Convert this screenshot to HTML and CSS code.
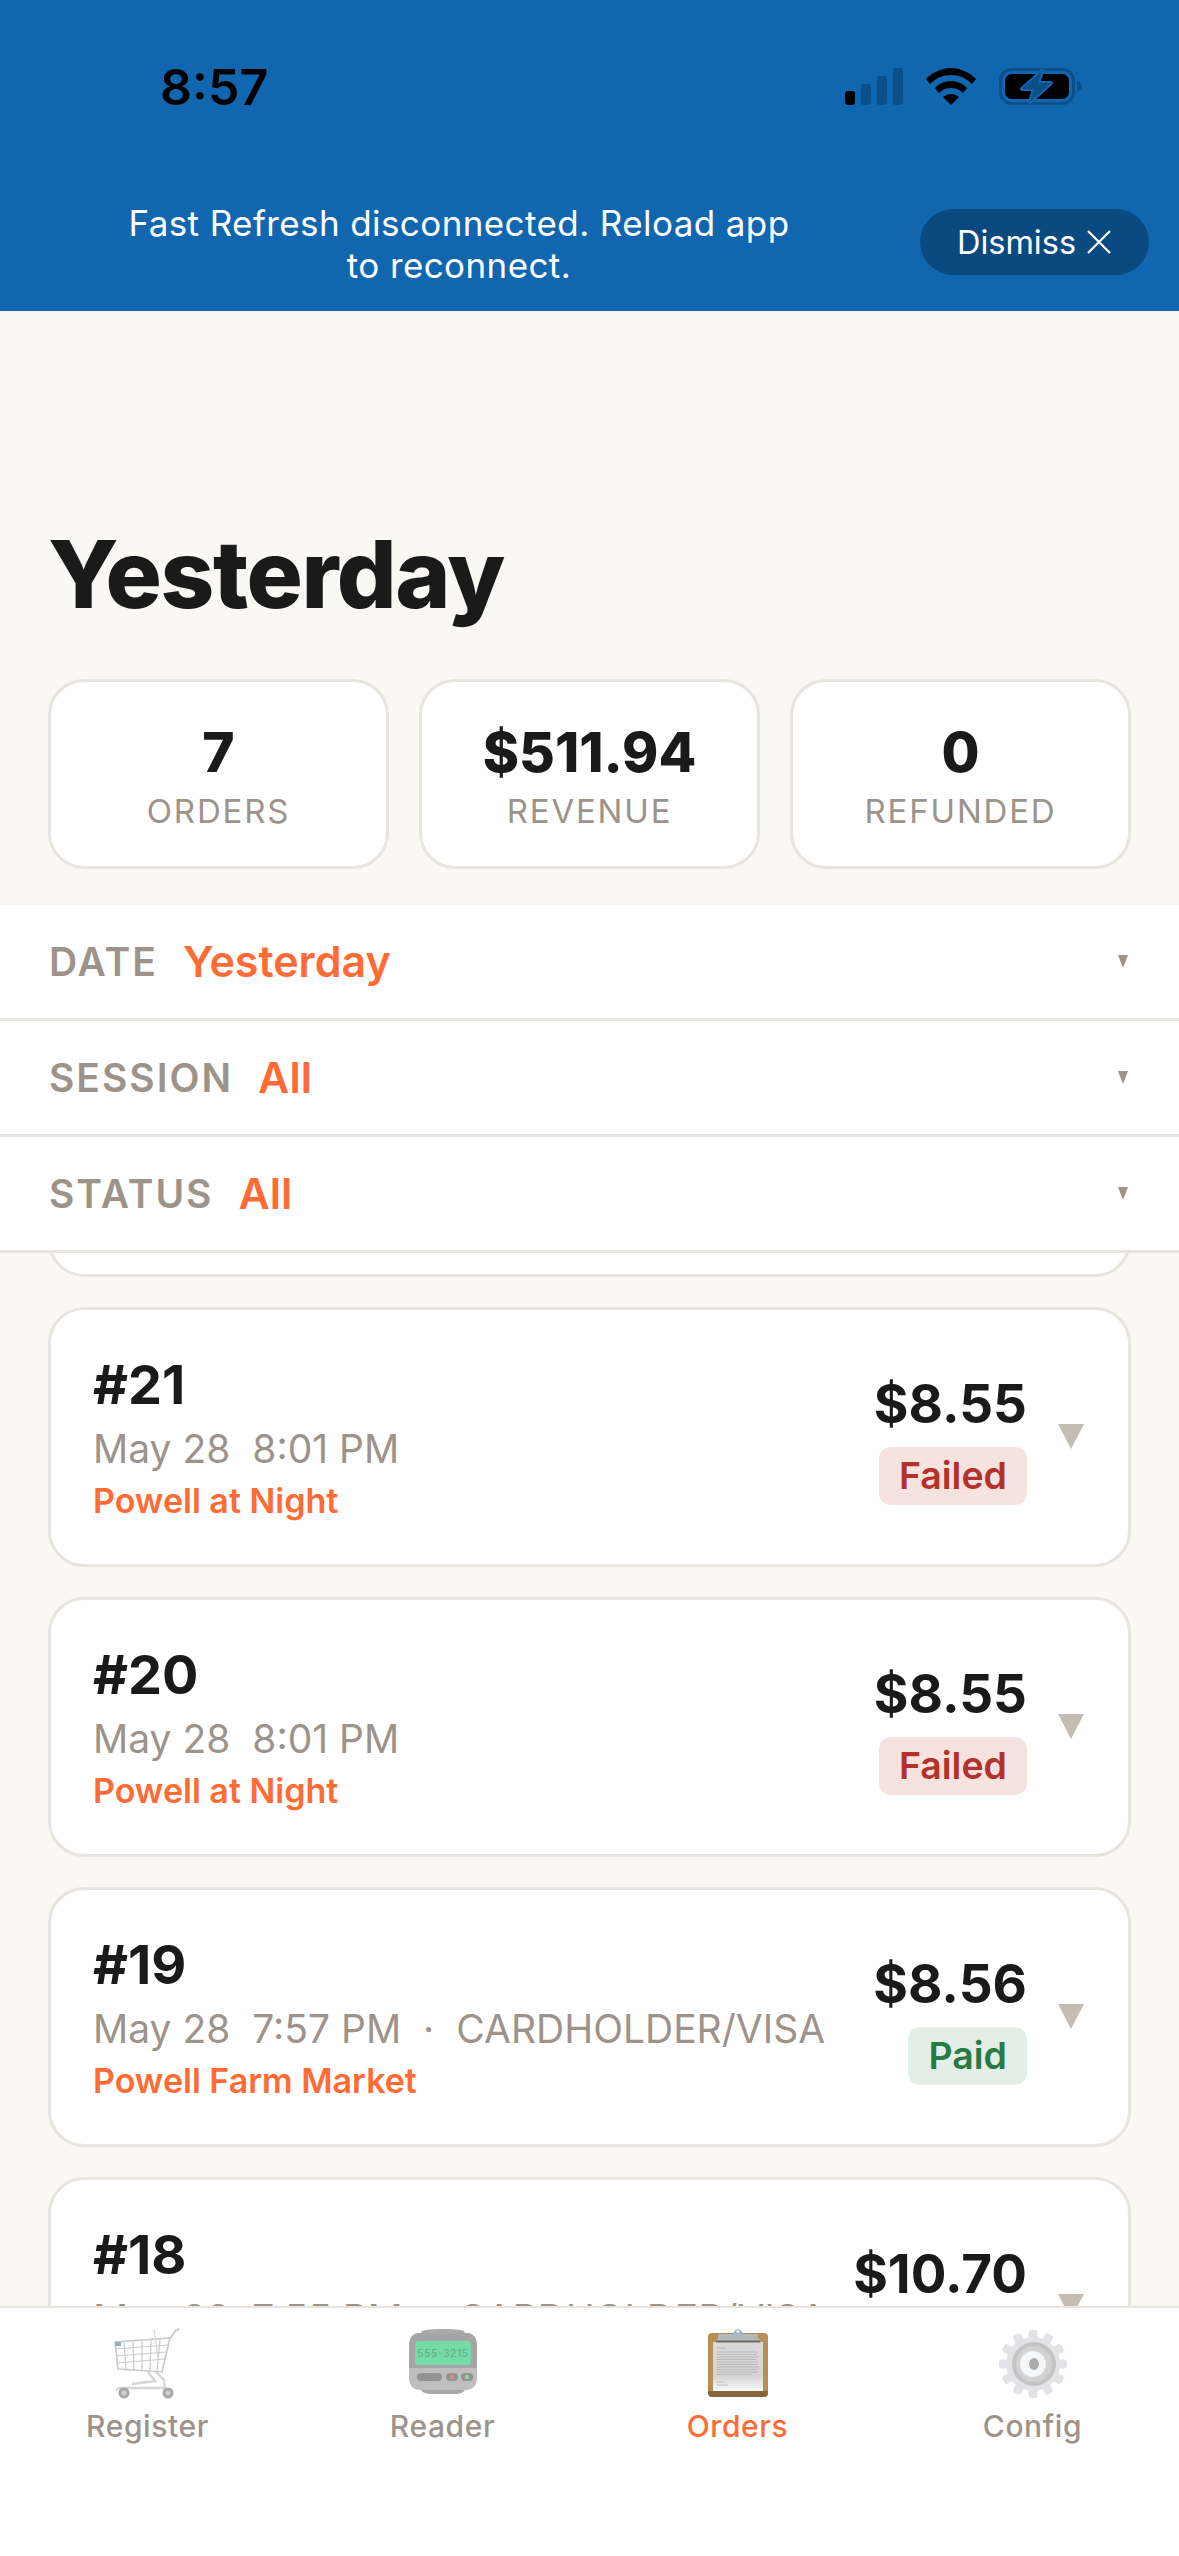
FILE: index.html
```html
<!DOCTYPE html>
<html lang="en">

<head>
    <meta charset="UTF-8" />
    <meta name="viewport" content="width=device-width, initial-scale=1.0" />
    <title>Orders</title>
    <link rel="stylesheet" href="styles.css">
</head>

<body>
    <div class="screen">
        <div class="banner">
            <div class="status-bar">
                <span class="time">8:57</span>
                <div class="status-icons">
                    <svg width="58" height="37" viewBox="0 0 58 37">
                        <rect x="0" y="23" width="10" height="14" rx="3" fill="#000" />
                        <rect x="16" y="16" width="10" height="21" rx="3" fill="#0b4f8a" />
                        <rect x="32" y="8" width="10" height="29" rx="3" fill="#0b4f8a" />
                        <rect x="48" y="0" width="10" height="37" rx="3" fill="#0b4f8a" />
                    </svg>
                    <svg width="50" height="37" viewBox="0 0 50 37">
                        <path d="M25 0C34 0 43 4 50 11L46 16C40 10 33 7 25 7C17 7 10 10 4 16L0 11C7 4 16 0 25 0Z" fill="#000" />
                        <path d="M25 13C31 13 36 15 41 20L37 25C33 21 29 20 25 20C21 20 17 21 13 25L9 20C14 15 19 13 25 13Z" fill="#000" />
                        <path d="M25 26C28 26 30 27 33 29L25 37L17 29C20 27 22 26 25 26Z" fill="#000" />
                    </svg>
                    <svg width="83" height="39" viewBox="0 0 83 39">
                        <rect x="1.500" y="2.500" width="73" height="34" rx="11" fill="none" stroke="#0b4f8a" stroke-width="3" />
                        <rect x="6" y="7" width="64" height="25" rx="7" fill="#000" />
                        <path d="M78 14C81 15 83 17 83 19.500C83 22 81 24 78 25Z" fill="#0b4f8a" />
                        <path d="M43 4L23 22H35L31 35L52 16H39Z" fill="#0b4f8a" stroke="#1066af" stroke-width="4" stroke-linejoin="round" paint-order="stroke" />
                    </svg>
                </div>
            </div>
            <div class="notice">
                <p class="notice-text">Fast Refresh disconnected. Reload app<br>to reconnect.</p>
                <div class="dismiss">
                    Dismiss
                    <svg width="26" height="26" viewBox="0 0 26 26">
                        <path d="M2 2L24 24M24 2L2 24" stroke="#fff" stroke-width="2.2" fill="none" />
                    </svg>
                </div>
            </div>
        </div>

        <h1 class="title">Yesterday</h1>

        <div class="stats">
            <div class="stat">
                <div class="stat-value">7</div>
                <div class="stat-label">ORDERS</div>
            </div>
            <div class="stat">
                <div class="stat-value">$511.94</div>
                <div class="stat-label">REVENUE</div>
            </div>
            <div class="stat">
                <div class="stat-value">0</div>
                <div class="stat-label">REFUNDED</div>
            </div>
        </div>

        <div class="filter">
            <span class="filter-label">DATE</span>
            <span class="filter-value">Yesterday</span>
            <span class="filter-arrow"></span>
        </div>
        <div class="filter">
            <span class="filter-label">SESSION</span>
            <span class="filter-value">All</span>
            <span class="filter-arrow"></span>
        </div>
        <div class="filter">
            <span class="filter-label">STATUS</span>
            <span class="filter-value">All</span>
            <span class="filter-arrow"></span>
        </div>

        <div class="orders">
            <!-- scrolled almost out of view -->
            <div class="order order-scrolled"></div>

            <div class="order">
                <div class="order-info">
                    <div class="order-number">#21</div>
                    <div class="order-meta">May 28&nbsp; 8:01 PM</div>
                    <div class="order-session">Powell at Night</div>
                </div>
                <div class="order-side">
                    <div class="order-price">$8.55</div>
                    <div class="badge badge-failed">Failed</div>
                </div>
                <span class="order-arrow"></span>
            </div>

            <div class="order">
                <div class="order-info">
                    <div class="order-number">#20</div>
                    <div class="order-meta">May 28&nbsp; 8:01 PM</div>
                    <div class="order-session">Powell at Night</div>
                </div>
                <div class="order-side">
                    <div class="order-price">$8.55</div>
                    <div class="badge badge-failed">Failed</div>
                </div>
                <span class="order-arrow"></span>
            </div>

            <div class="order">
                <div class="order-info">
                    <div class="order-number">#19</div>
                    <div class="order-meta">May 28&nbsp; 7:57 PM&nbsp; ·&nbsp; CARDHOLDER/VISA</div>
                    <div class="order-session">Powell Farm Market</div>
                </div>
                <div class="order-side">
                    <div class="order-price">$8.56</div>
                    <div class="badge badge-paid">Paid</div>
                </div>
                <span class="order-arrow"></span>
            </div>

            <div class="order">
                <div class="order-info">
                    <div class="order-number">#18</div>
                    <div class="order-meta">May 28&nbsp; 7:55 PM&nbsp; ·&nbsp; CARDHOLDER/VISA</div>
                    <div class="order-session">Powell Farm Market</div>
                </div>
                <div class="order-side">
                    <div class="order-price">$10.70</div>
                    <div class="badge badge-paid">Paid</div>
                </div>
                <span class="order-arrow"></span>
            </div>
        </div>

        <nav class="tabs">
            <div class="tab">
                <svg class="tab-icon dimmed" viewBox="0 0 72 72">
                    <g fill="none" stroke="#b9b9b9" stroke-width="1.2">
                        <path d="M3 14L58 10L50 44L6 41Z" stroke-width="1.6" />
                        <path d="M3.500 21L56.500 17M4 28L54.500 24M5 35L53 31" />
                        <path d="M12 13.500L14 42M21 13L22 42.500M30 12L30 43M39 11.500L38 43.500M48 11L45 44" />
                    </g>
                    <path d="M58 11L63 3L67 1" fill="none" stroke="#bdbdbd" stroke-width="2" />
                    <path d="M42 1L46 30" fill="none" stroke="#c9c9c9" stroke-width="1.2" />
                    <rect x="3" y="14" width="6" height="4" fill="#7f93a8" />
                    <path d="M36 44L43 53L20 56M44 44L52 52L53 61M53 60L8 60L4 62" fill="none" stroke="#c9c9c9" stroke-width="2.4" />
                    <circle cx="12" cy="65" r="5.500" fill="#8c8c8c" />
                    <circle cx="12" cy="65" r="2.500" fill="#c4c4c4" />
                    <circle cx="56" cy="65" r="5.500" fill="#8c8c8c" />
                    <circle cx="56" cy="65" r="2.500" fill="#c4c4c4" />
                </svg>
                <span>Register</span>
            </div>
            <div class="tab">
                <svg class="tab-icon dimmed" viewBox="0 0 72 72">
                    <path d="M14 5C14 2 20 1 36 1C52 1 58 2 58 5L58 8L14 8Z" fill="#8f8f8f" />
                    <path d="M2 18C2 9 6 5 12 5L60 5C66 5 70 9 70 18L70 42L2 42Z" fill="#878787" />
                    <path d="M2 40L70 40L70 50C70 59 64 62 58 62L14 62C8 62 2 59 2 50Z" fill="#a9a9a9" />
                    <path d="M14 62L58 62C56 65 52 66 48 66L24 66C20 66 16 65 14 62Z" fill="#8c8c8c" />
                    <rect x="8" y="13" width="56" height="24" rx="4" fill="#47d08a" />
                    <text class="pager-text" x="36" y="28.500" text-anchor="middle">555-3215</text>
                    <rect x="10" y="45" width="25" height="8" rx="4" fill="#6f6f6f" />
                    <rect x="39" y="45" width="12" height="8" rx="4" fill="#6f6f6f" />
                    <rect x="54" y="45" width="12" height="8" rx="4" fill="#6f6f6f" />
                    <circle cx="45" cy="49" r="2" fill="#e2686b" />
                    <circle cx="60" cy="49" r="2" fill="#5fe26a" />
                </svg>
                <span>Reader</span>
            </div>
            <div class="tab tab-active">
                <svg class="tab-icon" viewBox="0 0 72 72">
                    <defs>
                        <linearGradient id="paper" x1="0" y1="0" x2="0" y2="1">
                            <stop offset="0" stop-color="#d9d9d9" />
                            <stop offset="0.7" stop-color="#d4d4d4" />
                            <stop offset="1" stop-color="#fbfbfb" />
                        </linearGradient>
                    </defs>
                    <rect x="6" y="5" width="60" height="64" rx="4" fill="#b58f54" />
                    <path d="M6 63H66V65C66 67 64 69 62 69H10C8 69 6 67 6 65Z" fill="#85663a" />
                    <rect x="11" y="14" width="50" height="49" fill="url(#paper)" />
                    <g stroke="#9a9a9a" stroke-width="0.5">
                        <path d="M15 20H24M15 24H56M15 26.500H55M15 29H57M15 31.500H54M15 34H56M15 36.500H55M15 39H57M15 41.500H54M15 44H56M15 46.500H50M15 54H22M15 57H26" />
                    </g>
                    <path d="M16 7C16 6 17 6 18 6H54C55 6 56 6 56 7V10L59 13H13L16 10Z" fill="#b3b8bd" />
                    <rect x="14" y="12.500" width="44" height="2" fill="#6f6a62" />
                    <path d="M30 6C32 5 33 1 36 1C39 1 40 5 42 6Z" fill="#8fb0d3" />
                    <circle cx="36" cy="3.500" r="1.500" fill="#fff" />
                </svg>
                <span>Orders</span>
            </div>
            <div class="tab">
                <svg class="tab-icon dimmed" viewBox="0 0 72 72">
                    <g fill="#d8dade">
                        <circle cx="36" cy="36" r="27" />
                        <rect id="tooth" x="31.500" y="2" width="9" height="14" rx="3" />
                        <use href="#tooth" transform="rotate(30 36 36)" />
                        <use href="#tooth" transform="rotate(60 36 36)" />
                        <use href="#tooth" transform="rotate(90 36 36)" />
                        <use href="#tooth" transform="rotate(120 36 36)" />
                        <use href="#tooth" transform="rotate(150 36 36)" />
                        <use href="#tooth" transform="rotate(180 36 36)" />
                        <use href="#tooth" transform="rotate(210 36 36)" />
                        <use href="#tooth" transform="rotate(240 36 36)" />
                        <use href="#tooth" transform="rotate(270 36 36)" />
                        <use href="#tooth" transform="rotate(300 36 36)" />
                        <use href="#tooth" transform="rotate(330 36 36)" />
                    </g>
                    <circle cx="37" cy="36" r="22" fill="#b0b0b0" />
                    <circle cx="37" cy="36" r="18" fill="#c4c4c4" />
                    <circle cx="36" cy="36" r="13" fill="#f2f3f5" />
                    <ellipse cx="37" cy="36" rx="5" ry="6" fill="#8f8f8f" />
                </svg>
                <span>Config</span>
            </div>
        </nav>
    </div>
</body>

</html>
```

FILE: styles.css
```css
* {
    box-sizing: border-box;
}

body {
    margin: 0;
    font-family: Inter, "Liberation Sans", sans-serif;
    background: #faf8f5;
    color: #1a1a1a;
}

.screen {
    width: 1179px;
    height: 2556px;
    display: flex;
    flex-direction: column;
    overflow: hidden;
}

/* Banner + status bar */
.banner {
    height: 311px;
    flex: none;
    background: #1066af;
    color: white;
}

.status-bar {
    display: flex;
    justify-content: space-between;
    align-items: center;
    height: 143px;
    padding: 30px 97px 0 160px;
}

.time {
    font-size: 50px;
    font-weight: 600;
    color: #000;
}

.status-icons {
    display: flex;
    align-items: center;
    gap: 23px;
}

.notice {
    display: flex;
    align-items: center;
    padding: 0 30px 0 50px;
    margin-top: 63px;
    height: 72px;
}

.notice-text {
    flex: 1;
    margin: 0;
    padding-top: 3px;
    font-size: 35px;
    line-height: 42px;
    text-align: center;
    letter-spacing: 0.4px;
}

.dismiss {
    display: flex;
    align-items: center;
    justify-content: center;
    gap: 10px;
    width: 229px;
    height: 66px;
    margin-left: 52px;
    border-radius: 33px;
    background: #0b4a80;
    font-size: 32.500px;
}

/* Heading + stats */
.title {
    margin: 0;
    padding: 208px 48px 0;
    font-size: 94px;
    line-height: 110px;
    font-weight: 800;
    letter-spacing: -1.5px;
}

.stats {
    display: grid;
    grid-template-columns: repeat(3, 1fr);
    gap: 30px;
    padding: 0 48px;
    margin-top: 50px;
    margin-bottom: 36px;
}

.stat {
    height: 190px;
    padding-top: 39px;
    background: white;
    border: 3px solid #e8e4df;
    border-radius: 36px;
    text-align: center;
}

.stat-value {
    font-size: 55px;
    line-height: 62px;
    font-weight: 800;
}

.stat-label {
    margin-top: 8px;
    font-size: 33px;
    line-height: 40px;
    letter-spacing: 1.8px;
    color: #9c948a;
}

/* Filter rows */
.filter {
    display: flex;
    align-items: center;
    flex: none;
    height: 116px;
    padding: 0 49px;
    background: white;
    border-bottom: 3px solid #e8e4df;
}

.filter-label {
    font-size: 39px;
    font-weight: 600;
    letter-spacing: 2px;
    color: #9c948a;
}

.filter-value {
    margin-left: 25px;
    margin-top: -2px;
    font-size: 43px;
    font-weight: 600;
    color: #ff6b35;
}

.filter-arrow {
    margin-left: auto;
    margin-right: 2px;
    border-left: 5px solid transparent;
    border-right: 5px solid transparent;
    border-top: 13px solid #9c948a;
}

/* Order list */
.orders {
    flex: 1;
    min-height: 0;
    overflow: hidden;
    display: flex;
    flex-direction: column;
    gap: 30px;
    padding: 0 48px;
}

.order {
    display: flex;
    align-items: center;
    flex: none;
    height: 260px;
    padding: 0 45px 0 42px;
    background: white;
    border: 3px solid #e8e4df;
    border-radius: 36px;
}

.order-scrolled {
    margin-top: -236px;
}

.order-info {
    flex: 1;
}

.order-number {
    padding-top: 1px;
    font-size: 54px;
    line-height: 62px;
    font-weight: 700;
}

.order-meta {
    margin-top: 10px;
    font-size: 39px;
    line-height: 46px;
    color: #9c948a;
    white-space: nowrap;
}

.order-session {
    margin-top: 8px;
    font-size: 34px;
    line-height: 42px;
    font-weight: 600;
    color: #ff6b35;
}

.order-side {
    display: flex;
    flex-direction: column;
    align-items: flex-end;
    padding-top: 4px;
}

.order-price {
    font-size: 53px;
    line-height: 62px;
    font-weight: 700;
}

.badge {
    margin-top: 12px;
    height: 58px;
    padding: 0 20px;
    border-radius: 12px;
    font-size: 37.500px;
    line-height: 58px;
    font-weight: 600;
}

.badge-failed {
    background: #f6e3e0;
    color: #b3322c;
}

.badge-paid {
    background: #e3eee6;
    color: #2a7a46;
}

.order-arrow {
    flex: none;
    margin-left: 31px;
    margin-right: -1px;
    margin-top: -1px;
    border-left: 13px solid transparent;
    border-right: 13px solid transparent;
    border-top: 25px solid #c4bdb4;
}

/* Tab bar */
.tabs {
    display: grid;
    grid-template-columns: repeat(4, 295px);
    flex: none;
    height: 250px;
    padding-top: 20px;
    background: white;
    border-top: 2px solid #e8e4df;
}

.tab {
    display: flex;
    flex-direction: column;
    align-items: center;
    font-size: 30px;
    font-weight: 500;
    letter-spacing: 0.6px;
    color: #9c948a;
}

.tab-active {
    color: #ff6b35;
}

.tab-icon {
    width: 72px;
    height: 72px;
    margin-bottom: 8px;
}

.dimmed {
    opacity: 0.75;
}

.pager-text {
    font-family: Inter, sans-serif;
    font-size: 10px;
    font-weight: 600;
    fill: #2f9a68;
}
```
